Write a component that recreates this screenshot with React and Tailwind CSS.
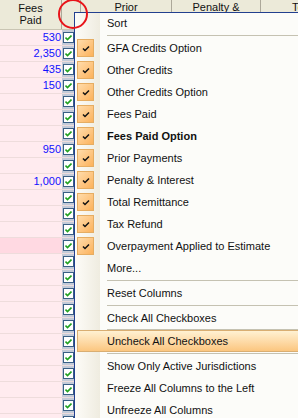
import React from 'react';

const font = { fontFamily: '"Liberation Sans", Arial, sans-serif' };

const values = ['530', '2,350', '435', '150', '', '', '', '950', '', '1,000'];

function GridCheck() {
  return (
    <div className="w-[11px] h-[11px] border border-[#3a5f86] bg-white flex items-center justify-center">
      <svg width="7" height="6" viewBox="0 0 7 6">
        <path d="M0.5 2.5 L2.5 4.5 L6.5 0.5" stroke="#21a121" strokeWidth="1.6" fill="none" />
      </svg>
    </div>
  );
}

function MenuCheck() {
  return (
    <div className="w-[17px] h-[18px] border border-[#e6ad62] bg-gradient-to-br from-[#ffdcaa] to-[#fcb25a] flex items-center justify-center">
      <svg width="8" height="7" viewBox="0 0 8 7">
        <path d="M1 3.5 L3 5.5 L7 1.5" stroke="#111" strokeWidth="1.5" fill="none" />
      </svg>
    </div>
  );
}

function Item({ label, checked, bold, arrow, h = 'h-[22px]' }) {
  return (
    <div className={`flex items-center ${h}`}>
      <div className="w-[25px] pl-[2px] flex items-center">{checked && <MenuCheck />}</div>
      <span className={`pl-[7px] text-[11px] text-[#111] ${bold ? 'font-bold' : ''}`}>{label}</span>
      {arrow && (
        <svg className="ml-auto mr-[6px]" width="4" height="7" viewBox="0 0 4 7">
          <path d="M0 0 L4 3.5 L0 7 Z" fill="#000" />
        </svg>
      )}
    </div>
  );
}

function Sep({ h = 'h-[3px]' }) {
  return (
    <div className={`${h} pl-[32px] flex flex-col justify-center`}>
      <div className="h-px bg-[#c5c2b2]" />
    </div>
  );
}

export default function App() {
  const checkedItems = [
    'GFA Credits Option',
    'Other Credits',
    'Other Credits Option',
    'Fees Paid',
    'Fees Paid Option',
    'Prior Payments',
    'Penalty & Interest',
    'Total Remittance',
    'Tax Refund',
    'Overpayment Applied to Estimate',
  ];

  return (
    <div className="relative w-[298px] h-[418px] overflow-hidden bg-white" style={font}>
      {/* grid header */}
      <div className="flex h-[30px] bg-[#ecead9] border-b border-[#c9c5b3] text-[11px] text-[#111] leading-[12px]">
        <div className="w-[62px] shrink-0 border-r border-[#aca899] flex flex-col items-center pt-[2px]">
          <span>Fees</span>
          <span>Paid</span>
        </div>
        <div className="w-[19px] shrink-0 border-r border-[#aca899]" />
        <div className="w-[91px] shrink-0 border-r border-[#aca899] flex justify-center pt-[1px]">Prior</div>
        <div className="w-[89px] shrink-0 border-r border-[#aca899] flex justify-center pt-[1px]">Penalty &amp;</div>
        <div className="flex-1 pl-[31px] pt-[1px] whitespace-nowrap">Total</div>
      </div>

      {/* grid rows */}
      {Array.from({ length: 25 }).map((_, i) => (
        <div
          key={i}
          className={`flex h-[16px] border-b border-[#eedcdc] ${i === 13 ? 'bg-[#ffd9e2]' : 'bg-[#ffebef]'}`}
        >
          <div className="w-[62px] shrink-0 text-right pr-[1px] text-[11px] leading-[15px] text-[#1010ff]">
            {values[i] || ''}
          </div>
          <div className="w-[14px] shrink-0 bg-[#c3cbd8] flex items-center pl-[1px]">
            <GridCheck />
          </div>
          <div className="flex-1" />
        </div>
      ))}

      {/* context menu */}
      <div className="absolute left-[74px] top-[12px] w-[240px] h-[420px] border-l border-t border-[#23408f] bg-[linear-gradient(to_right,#fdfcf8_0px,#efece0_25px,#fcfcf9_25px)]">
        <Item label="Sort" arrow h="h-[21px]" />
        <Sep />
        {checkedItems.map((l) => (
          <Item key={l} label={l} checked bold={l === 'Fees Paid Option'} />
        ))}
        <Item label="More..." />
        <Sep />
        <Item label="Reset Columns" />
        <Sep />
        <Item label="Check All Checkboxes" />
        <Sep h="h-px" />
        <div className="h-[22px] ml-[2px] border border-[#d9ae72] bg-gradient-to-b from-[#fff1d2] to-[#fbc67f] flex items-center">
          <span className="pl-[29px] text-[11px] text-[#111]">Uncheck All Checkboxes</span>
        </div>
        <Sep />
        <Item label="Show Only Active Jurisdictions" />
        <Item label="Freeze All Columns to the Left" />
        <Item label="Unfreeze All Columns" />
      </div>

      {/* red annotation circle */}
      <div className="absolute left-[58px] top-[-1px] w-[30px] h-[30px] rounded-full border-2 border-[#e8141a]" />
    </div>
  );
}
